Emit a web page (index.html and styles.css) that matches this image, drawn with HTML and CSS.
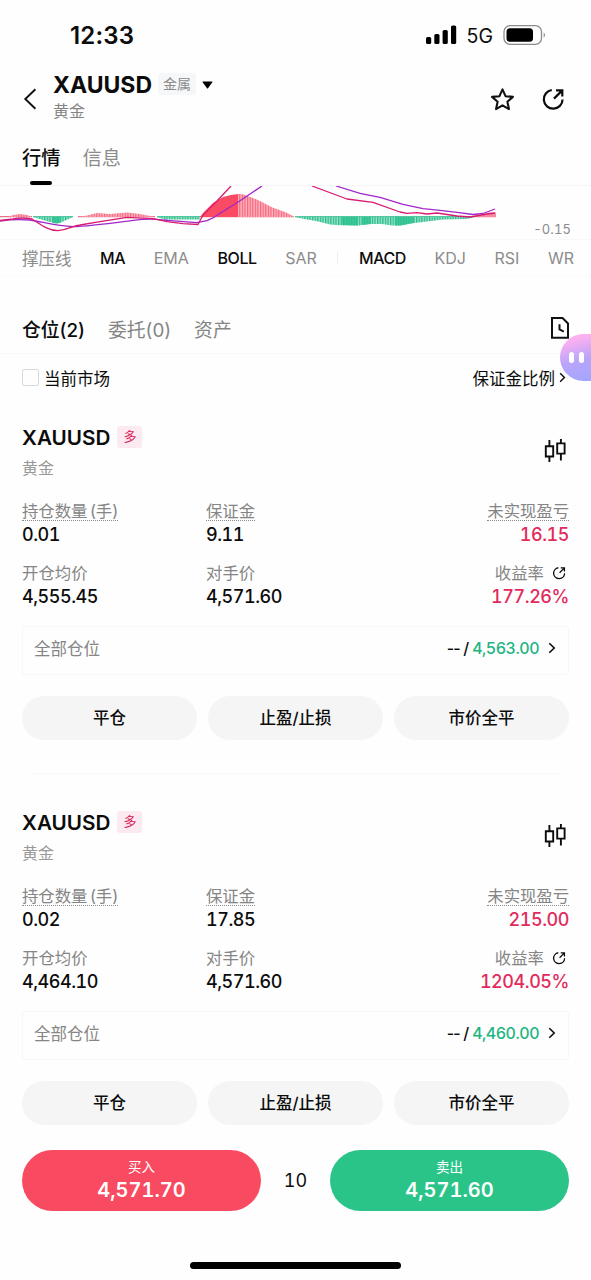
FILE: index.html
```
<!DOCTYPE html>
<html lang="zh-CN">
<head>
<meta charset="utf-8">
<title>XAUUSD</title>
<link rel="stylesheet" href="styles.css">
</head>
<body>
<svg class="defs" width="0" height="0">
  <symbol id="share" viewBox="0 0 24 24"><path d="M10.800 3A9.400 9.400 0 1 0 21.600 12.500M13 11.600 20.500 4.100M15 3.300H21.300V9.600" fill="none" stroke="currentColor" stroke-width="2.200"/></symbol>
  <symbol id="chev" viewBox="0 0 8 12"><path d="M1.3 1.2 6.2 6 1.3 10.8" fill="none" stroke="currentColor" stroke-width="1.6"/></symbol>
  <symbol id="candles" viewBox="0 0 22 23"><path d="M5.4 1v5.500M5.400 18v5M1.800 7.300h7.400v10.200H1.800zM16.900 0v3.600M16.900 15.200v6.300M13.200 4.400h7.400v10.200h-7.400z" fill="none" stroke="currentColor" stroke-width="1.9"/></symbol>
</svg>

<header class="status">
  <span class="time">12:33</span>
  <div class="signals">
    <svg width="31" height="20" viewBox="0 0 31 20"><rect x="0" y="12" width="5.200" height="7" rx="1.600"/><rect x="8.300" y="9" width="5.200" height="10" rx="1.600"/><rect x="16.600" y="5" width="5.200" height="14" rx="1.600"/><rect x="25" y="0.500" width="5.200" height="18.500" rx="1.600"/></svg>
    <span class="net">5G</span>
    <svg width="44" height="20" viewBox="0 0 44 20"><rect x="1" y="0.700" width="37.500" height="18.600" rx="6" fill="none" stroke="#8c8c8c" stroke-width="1.300"/><rect x="3.500" y="3.200" width="26.500" height="13.600" rx="3.500"/><path d="M40.700 7.200q2.600 2.800 0 5.600z" fill="#8c8c8c"/></svg>
  </div>
</header>

<nav class="head">
  <svg class="back" width="14" height="22" viewBox="0 0 14 22"><path d="M12.400 1.300 2.300 11l10.100 9.700" fill="none" stroke="#111" stroke-width="1.900"/></svg>
  <div class="names">
    <div class="name-row"><h1>XAUUSD</h1><span class="tag">金属</span><svg width="11" height="8" viewBox="0 0 11 8"><path d="M1 .5h9Q10.900 .6 10.200 1.500L6 7.200q-.5.500-1 0L.8 1.500Q.1.600 1 .5z"/></svg></div>
    <div class="sub">黄金</div>
  </div>
  <div class="actions">
    <svg width="25" height="25" viewBox="0 0 24 24"><path d="m12 2.300 2.900 6.500 7.100.7-5.300 4.700 1.500 7L12 17.600l-6.200 3.600 1.500-7L2 9.500l7.100-.7z" fill="none" stroke="#111" stroke-width="2" stroke-linejoin="round"/></svg>
    <svg width="24" height="24"><use href="#share"/></svg>
  </div>
</nav>

<div class="tabs"><span class="on">行情</span><span>信息</span></div>

<div class="chart">
  <svg width="591" height="54" viewBox="0 0 591 54">
    <defs>
      <pattern id="rs" width="2.600" height="54" patternUnits="userSpaceOnUse"><rect width="2.600" height="54" fill="#ffb3bf"/><rect width="1.200" height="54" fill="#f4667c"/></pattern>
      <pattern id="gs" width="2.600" height="54" patternUnits="userSpaceOnUse"><rect width="2.600" height="54" fill="#9be6cb"/><rect width="1.300" height="54" fill="#2cba8b"/></pattern>
    </defs>
    <path d="M0 30.700H32M78 30.700H155M200 30.700H294M475 30.700H496" stroke="#e0526c"/>
    <path d="M33 30.700H73M157 30.700H200M295 30.700H475" stroke="#2cba8b"/>
    <path d="M8 31 13 29 20 28 27 29 32 31zM78 31 87 29.500 97 27 110 28 127 26.500 140 28 155 31zM238 31V8l5 .3 15 5.700 15 7.700 12 4.300 10 5z" fill="url(#rs)"/>
    <path d="M33 31 43 34 52 36.500 57 37.500 62 36 73 31zM157 31 165 33.500H200V31zM295 31 304 33 316 35 330 38.500 340 39.300 358 39.500 370 38H382L392 39.500H400L410 37.500 423 36 443 33.500 467 33 475 31z" fill="url(#gs)"/>
    <path d="M200 31 204 26 213 17 223 11 231 9 238 8V31z" fill="#fb4a63"/>
    <path d="M53 31V37l4 .5 4-1V31zM342 31V39l16 .5V31zM362 31V39l9-1V31zM395 31V39.500H401L414 37V31z" fill="#2cc28e" opacity=".8"/>
    <path d="M475 31 483 29 489 26.500H496V31z" fill="#f58aa3"/>
    <g fill="none" stroke-width="1.300" stroke-linejoin="round">
      <path d="M0 35Q15 33 30 34C45 36.500 57 40 73 40.700 90 40 117 36.300 133 34.300 148 32.500 153 33 167 34.300L197 36.700 207 34.700Q214 32 220 27.300L237 16.700 262 0M336 0 360 7.300 380 11.300 403 18.300 423 22.700 440 24.300 457 26.300 473 28.500 483 27.500 495 23" stroke="#a226c8"/>
      <path d="M0 34.500 13 33Q22 31 32 33C40 38 48 44.700 58 44.700 68 44 73 39.500 80 39L100 35.700 127 31.300 153 32.700 167 35.700 183 37.700 198 38.500 203 29 217 15 231 0M312 0 347 13 373 16.300 400 26 407 27.300 417 26.700 427 28 437 27 457 30 470 31 487 28 495 27" stroke="#d81b70"/>
    </g>
  </svg>
  <span class="axis">-0.15</span>
</div>

<div class="indicators"><span>撑压线</span><span class="on">MA</span><span>EMA</span><span class="on">BOLL</span><span>SAR</span><i></i><span class="on">MACD</span><span>KDJ</span><span>RSI</span><span>WR</span></div>

<div class="ptabs"><span class="on">仓位(2)</span><span>委托(0)</span><span>资产</span>
  <svg width="20" height="24" viewBox="0 0 20 24"><path d="M2 2h10.500L18 7.500V21.800H2zM9.500 8.200v5.300l4.300 2.200" fill="none" stroke="#111" stroke-width="2"/></svg>
</div>

<div class="filter"><span class="check"></span><span>当前市场</span><span class="ratio">保证金比例</span><svg width="7" height="11"><use href="#chev"/></svg>
  <div class="bot"><b></b><b></b></div>
</div>

<section class="card">
  <div class="chead"><div><div class="ctitle"><h2>XAUUSD</h2><span class="long">多</span></div><div class="csub">黄金</div></div><svg width="22" height="23"><use href="#candles"/></svg></div>
  <div class="stats">
    <div><label class="dot">持仓数量 (手)</label><strong>0.01</strong></div>
    <div><label class="dot">保证金</label><strong>9.11</strong></div>
    <div class="end"><label class="dot">未实现盈亏</label><strong class="red">16.15</strong></div>
    <div><label>开仓均价</label><strong>4,555.45</strong></div>
    <div><label>对手价</label><strong>4,571.60</strong></div>
    <div class="end"><label>收益率<svg width="14" height="14"><use href="#share"/></svg></label><strong class="red">177.26%</strong></div>
  </div>
  <div class="all"><span>全部仓位</span><em class="none">-- /</em><em class="green">4,563.00</em><svg width="8" height="12"><use href="#chev"/></svg></div>
  <div class="btns"><button>平仓</button><button>止盈/止损</button><button>市价全平</button></div>
  <hr>
</section>

<section class="card">
  <div class="chead"><div><div class="ctitle"><h2>XAUUSD</h2><span class="long">多</span></div><div class="csub">黄金</div></div><svg width="22" height="23"><use href="#candles"/></svg></div>
  <div class="stats">
    <div><label class="dot">持仓数量 (手)</label><strong>0.02</strong></div>
    <div><label class="dot">保证金</label><strong>17.85</strong></div>
    <div class="end"><label class="dot">未实现盈亏</label><strong class="red">215.00</strong></div>
    <div><label>开仓均价</label><strong>4,464.10</strong></div>
    <div><label>对手价</label><strong>4,571.60</strong></div>
    <div class="end"><label>收益率<svg width="14" height="14"><use href="#share"/></svg></label><strong class="red">1204.05%</strong></div>
  </div>
  <div class="all"><span>全部仓位</span><em class="none">-- /</em><em class="green">4,460.00</em><svg width="8" height="12"><use href="#chev"/></svg></div>
  <div class="btns"><button>平仓</button><button>止盈/止损</button><button>市价全平</button></div>
</section>

<footer class="trade">
  <div class="buy"><small>买入</small><b>4,571.70</b></div>
  <span class="qty">10</span>
  <div class="sell"><small>卖出</small><b>4,571.60</b></div>
</footer>
<div class="home"></div>
</body>
</html>
```

FILE: styles.css
```
* { box-sizing: border-box; margin: 0; padding: 0; }
body { width: 591px; height: 1280px; overflow: hidden; background: #fefefe; color: #0c0c0c; font-family: Inter, "Noto Sans CJK SC", sans-serif; display: flex; flex-direction: column; }
body > * { flex: none; }
svg { display: block; flex: none; }
.defs { position: absolute; }

.status { height: 70px; display: flex; justify-content: space-between; padding: 0 44px 0 70px; }
.time { font-size: 24px; font-weight: 600; line-height: 72px; letter-spacing: .2px; }
.signals { display: flex; align-items: center; height: 70px; }
.net { font-size: 19.500px; margin: 2px 10px 0 10px; }

.head { height: 58px; display: flex; padding: 0 26px 0 23px; }
.back { margin-top: 18px; }
.names { margin-left: 16px; flex: 1; }
.name-row { display: flex; align-items: center; height: 30px; }
h1 { font-size: 23px; font-weight: 700; }
.tag { background: #f6f7f8; color: #8b8b8b; font-size: 14px; line-height: 22px; padding: 0 5px; margin: 0 6px 2px 6px; border-radius: 3px; }
.sub { font-size: 16px; line-height: 22px; color: #858585; }
.actions { display: flex; gap: 26px; padding-top: 17px; }

.tabs { height: 58px; border-bottom: 1px solid #f5f5f5; padding-left: 22px; display: flex; gap: 22px; font-size: 19.300px; line-height: 60px; color: #8c8c8c; }
.tabs .on { color: #0c0c0c; font-weight: 500; display: flex; flex-direction: column; align-items: center; }
.tabs .on::after { content: ""; width: 22px; height: 4px; border-radius: 2px; background: #000; margin-top: -7px; }

.chart { height: 54px; position: relative; border-bottom: 1px solid #f8f8f8; }
.axis { position: absolute; right: 20px; bottom: 2px; font-size: 13px; line-height: 16px; color: #8a8a8a; font-variant-numeric: tabular-nums; letter-spacing: .1px; }

.indicators { height: 37px; display: flex; align-items: center; padding: 0 17px 0 22px; justify-content: space-between; font-size: 16px; color: #8c8c8c; border-bottom: 1px solid #fafafa; }
.indicators span:first-child { font-size: 16.500px; }
.indicators .on { color: #0c0c0c; font-weight: 500; letter-spacing: -.4px; }
.indicators i { width: 1px; height: 12px; background: #eee; margin: 0 -8px; }

.ptabs { height: 77px; display: flex; align-items: center; gap: 23px; padding: 26px 21px 0 22px; font-size: 18.800px; color: #858585; border-bottom: 1px solid #f8f8f8; }
.ptabs .on { color: #0c0c0c; font-weight: 500; }
.ptabs svg { margin-left: auto; }

.filter { height: 60px; display: flex; padding: 0 25px 13px 22px; align-items: center; font-size: 16.500px; position: relative; }
.check { width: 17px; height: 17px; border: 1px solid #d8d8d8; border-radius: 2px; margin-right: 5px; }
.ratio { margin-left: auto; margin-right: 4px; }
.bot { position: absolute; left: 560px; top: -20px; width: 60px; height: 47px; border-radius: 24px; background: linear-gradient(165deg, #fbb0f0 15%, #b9a4fa 50%, #a4a6ff 85%); padding: 18px 0 0 9px; display: flex; gap: 5px; }
.bot b { width: 5px; height: 11px; border-radius: 3px; background: #fff; }

.card { height: 385px; padding: 0 22px; }
.card + .card { height: 346px; }
.chead { height: 84px; display: flex; justify-content: space-between; align-items: flex-start; padding: 8px 3px 0 0; }
.chead > svg { margin-top: 17px; }
.ctitle { display: flex; align-items: center; height: 30px; gap: 7px; }
h2 { font-size: 20.700px; font-weight: 600; }
.long { background: #fdeaf0; color: #d81f5a; width: 25px; height: 22px; border-radius: 3px; font-size: 13px; line-height: 21px; text-align: center; }
.csub { font-size: 16px; line-height: 33px; color: #999; }
.stats { display: grid; grid-template-columns: 184px 1fr 150px; grid-auto-rows: 62px; height: 128px; }
.stats > div { display: flex; flex-direction: column; align-items: flex-start; }
.stats > .end { align-items: flex-end; }
.stats label { font-size: 16.400px; line-height: 26px; height: 24px; padding-top: 1px; color: #858585; display: flex; align-items: center; white-space: pre; word-spacing: -2px; }
.stats .dot { border-bottom: 1px dotted #8c8c8c; height: 23px; padding-top: 3px; margin-bottom: 1px; letter-spacing: -.05px; }
.stats label svg { color: #0c0c0c; margin: 1px 3px 0 8px; }
.stats strong { font-size: 18px; font-weight: 500; line-height: 25px; font-variant-numeric: tabular-nums; letter-spacing: -.45px; }
.stats .red { color: #e22b5c; }
.all { height: 49px; border: 1px solid #f7f7f7; border-radius: 3px; display: flex; align-items: center; padding: 0 12px 5px 11px; font-size: 16.500px; color: #858585; }
.all span { margin-right: auto; }
.all em { font-style: normal; font-weight: 500; color: #0c0c0c; font-size: 16px; }
.all .none { letter-spacing: -.9px; margin-right: 4px; }
.all .green { color: #1fb583; margin-right: 9px; font-variant-numeric: tabular-nums; letter-spacing: -.5px; }
.all svg { color: #0c0c0c; }
.btns { margin-top: 21px; display: flex; gap: 11px; }
.btns button { flex: 1; height: 44px; border: 0; border-radius: 22px; background: #f5f5f5; font: 500 16.500px Inter, "Noto Sans CJK SC", sans-serif; color: #0c0c0c; padding-bottom: 2px; }
.card hr { border: 0; height: 2px; background: #fafafa; margin: 33px 10px 0; }

.trade { height: 66px; padding: 5px 22px 0; display: flex; align-items: center; justify-content: space-between; font-variant-numeric: tabular-nums; }
.buy, .sell { width: 239px; height: 61px; border-radius: 31px; background: #f84b62; color: #fff; display: flex; flex-direction: column; align-items: center; padding-top: 7px; }
.sell { background: #2bc488; }
.trade small { font-size: 13.500px; line-height: 20px; }
.trade b { font-size: 20px; font-weight: 600; line-height: 26px; }
.qty { font-size: 18px; }
.home { width: 211px; height: 7px; border-radius: 4px; background: #000; margin: 51px auto 0; }
```
